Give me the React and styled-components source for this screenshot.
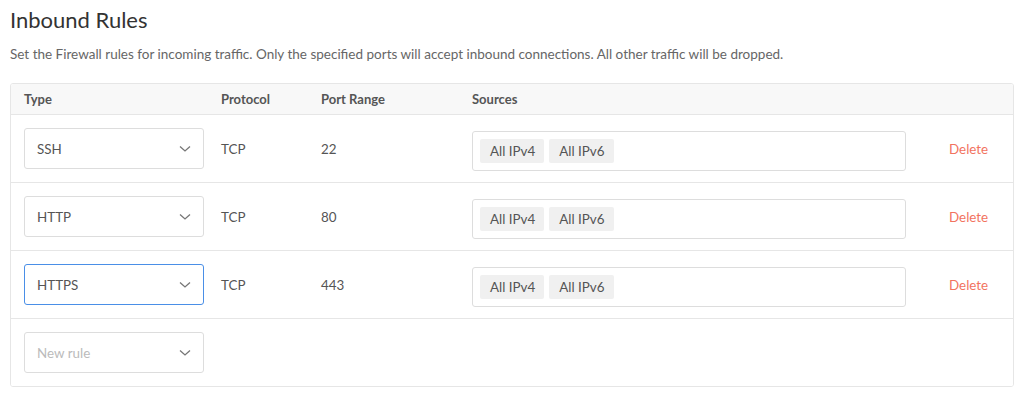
import React from "react";
import styled, { createGlobalStyle } from "styled-components";

const GlobalStyle = createGlobalStyle`
  body {
    margin: 0;
    background: #ffffff;
    font-family: "Lato", "Open Sans", sans-serif;
    color: #444;
  }
`;

const Page = styled.div`
  padding: 0 10px;
`;

const Title = styled.h1`
  margin: 6px 0 0;
  font-size: 22px;
  line-height: 28px;
  font-weight: 400;
  color: #333;
`;

const Description = styled.p`
  margin: 11px 0 20px;
  font-size: 13.5px;
  line-height: 18px;
  color: #666;
`;

const Table = styled.div`
  border: 1px solid #e6e6e6;
  border-radius: 3px;
  overflow: hidden;
`;

const Row = styled.div`
  display: grid;
  grid-template-columns: 197px 100px 151px 434px 1fr;
  align-items: center;
  padding-left: 13px;
  height: ${(p) => p.height}px;
  background: ${(p) => (p.header ? "#f8f8f8" : "#ffffff")};
  border-bottom: ${(p) => (p.last ? "none" : "1px solid #e6e6e6")};
  box-sizing: border-box;
`;

const HeadCell = styled.div`
  font-size: 13px;
  font-weight: 700;
  color: #555;
`;

const Cell = styled.div`
  font-size: 13.4px;
  color: #555;
`;

const Select = styled.div`
  width: 180px;
  height: ${(p) => p.height}px;
  box-sizing: border-box;
  border: 1px solid ${(p) => (p.focused ? "#4a8fe7" : "#dddddd")};
  border-radius: 3px;
  display: flex;
  align-items: center;
  justify-content: space-between;
  padding: 0 12px 0 12px;
  font-size: 13.4px;
  color: ${(p) => (p.placeholder ? "#bbbbbb" : "#555")};
`;

const Sources = styled.div`
  height: 40px;
  margin-top: 5px;
  box-sizing: border-box;
  border: 1px solid #dddddd;
  border-radius: 3px;
  display: flex;
  align-items: center;
  gap: 5px;
  padding: 0 7px;
`;

const Tag = styled.span`
  background: #f0f0f0;
  border-radius: 2px;
  height: 24px;
  line-height: 24px;
  padding: 0 9px 0 10px;
  font-size: 13.4px;
  color: #555;
`;

const DeleteLink = styled.a`
  padding-left: 43px;
  font-size: 13.4px;
  color: #f2735f;
  cursor: pointer;
`;

const Chevron = () => (
  <svg width="12" height="8" viewBox="0 0 12 8">
    <polyline
      points="1,1.5 6,6 11,1.5"
      fill="none"
      stroke="#777"
      strokeWidth="1.3"
    />
  </svg>
);

const rules = [
  { type: "SSH", port: "22" },
  { type: "HTTP", port: "80" },
  { type: "HTTPS", port: "443", focused: true },
];

export default function App() {
  return (
    <Page>
      <GlobalStyle />
      <Title>Inbound Rules</Title>
      <Description>
        Set the Firewall rules for incoming traffic. Only the specified ports
        will accept inbound connections. All other traffic will be dropped.
      </Description>
      <Table>
        <Row header height={31}>
          <HeadCell>Type</HeadCell>
          <HeadCell>Protocol</HeadCell>
          <HeadCell>Port Range</HeadCell>
          <HeadCell>Sources</HeadCell>
          <div />
        </Row>
        {rules.map((r) => (
          <Row key={r.type} height={68}>
            <Select height={41} focused={r.focused}>
              {r.type}
              <Chevron />
            </Select>
            <Cell>TCP</Cell>
            <Cell>{r.port}</Cell>
            <Sources>
              <Tag>All IPv4</Tag>
              <Tag>All IPv6</Tag>
            </Sources>
            <DeleteLink>Delete</DeleteLink>
          </Row>
        ))}
        <Row last height={67}>
          <Select height={41} placeholder>
            New rule
            <Chevron />
          </Select>
          <div />
          <div />
          <div />
          <div />
        </Row>
      </Table>
    </Page>
  );
}
